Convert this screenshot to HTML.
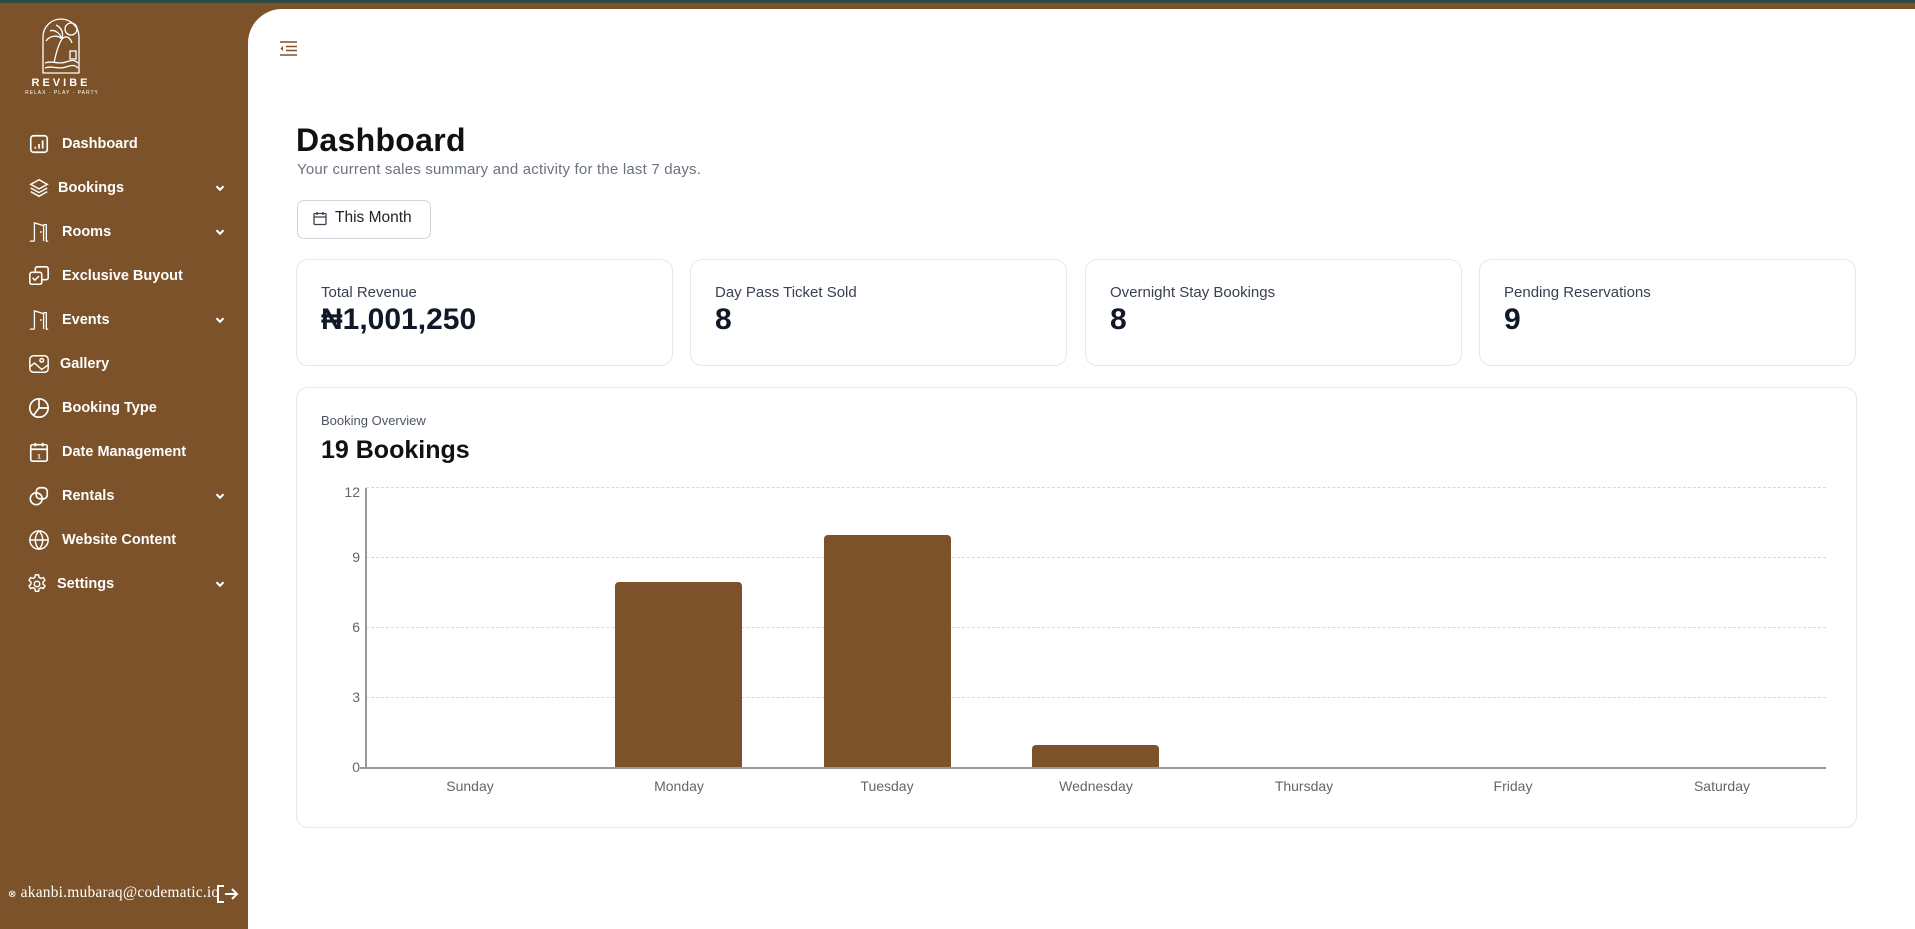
<!DOCTYPE html>
<html><head><meta charset="utf-8"><style>
*{box-sizing:border-box;margin:0;padding:0}
body{width:1915px;height:929px;overflow:hidden;background:#7B5229;font-family:"Liberation Sans",sans-serif;position:relative}
.topbar{position:absolute;left:0;top:0;width:1915px;height:3px;background:#2e4a45}
.main{position:absolute;left:248px;top:9px;width:1667px;height:920px;background:#fff;border-top-left-radius:34px}
.nav{position:absolute;left:0;width:248px;height:24px;color:#fff;font-weight:bold;font-size:14.5px}
.nav svg.ic{position:absolute;left:28px;top:1px}
.nav span{position:absolute;left:62px;top:4px}
.nav .ch{position:absolute;left:213px;top:5px}
.abs{position:absolute}
.card{position:absolute;top:259px;height:107px;width:377px;border:1px solid #e5e7eb;border-radius:12px;background:#fff}
.card .l{position:absolute;left:24px;top:24px;font-size:15px;color:#374151}
.card .v{position:absolute;left:24px;top:43px;font-size:30px;font-weight:bold;color:#111827}
.grid{position:absolute;left:366px;width:1460px;border-top:1.5px dashed #d9d9d9}
.yl{position:absolute;left:340px;width:20px;text-align:right;font-size:14px;color:#666}
.xl{position:absolute;top:778px;width:208px;text-align:center;font-size:14px;color:#666}
.bar{position:absolute;width:127px;background:#7B5229;border-radius:4px 4px 0 0}
</style></head><body>
<div class="topbar"></div>
<svg class="abs" style="left:38px;top:15px" width="46" height="60" viewBox="0 0 46 60" fill="none" stroke="#fff" stroke-width="1.3">
<path d="M5 58V22A18 18 0 0 1 41 22V58Z"/>
<circle cx="33" cy="14" r="6"/>
<path d="M16 48C18 38 20 30 24 24M24 24C20 20 12 20 8 26M24 24C22 18 16 14 12 16M24 24C28 20 32 22 34 28M24 24C26 16 22 12 18 10"/>
<path d="M7 48C14 45 20 50 28 47S38 46 40 48M7 53C14 50 20 55 28 52S38 51 40 53"/>
<rect x="32" y="36" width="6" height="8"/>
</svg>
<div class="abs" style="left:25px;top:77px;width:72px;text-align:center;color:#fff;font-size:11px;letter-spacing:3px;font-weight:bold">REVIBE</div>
<div class="abs" style="left:18px;top:90px;width:88px;text-align:center;color:#fff;font-size:5px;letter-spacing:1px">RELAX · PLAY · PARTY</div>

<div class="nav" style="top:132px"><svg class="ic" width="22" height="22" viewBox="0 0 24 24" fill="none" stroke="#fff" stroke-width="1.8"><rect x="3" y="3" width="18" height="18" rx="3"/><path d="M8 17v-2M12 17v-5M16 17V8"/></svg><span>Dashboard</span></div>
<div class="nav" style="top:176px"><svg class="ic" width="22" height="22" viewBox="0 0 24 24" fill="none" stroke="#fff" stroke-width="1.6"><path d="M12 3 3 8l9 5 9-5z"/><path d="M3 12l9 5 9-5M3 16l9 5 9-5"/></svg><span style="left:58px">Bookings</span><svg class="ch" width="14" height="14" viewBox="0 0 12 12" fill="none" stroke="#fff" stroke-width="1.8"><path d="M3 4.5l3 3 3-3"/></svg></div>
<div class="nav" style="top:220px"><svg class="ic" width="22" height="22" viewBox="0 0 24 24" fill="none" stroke="#fff" stroke-width="1.4"><path d="M2 22h5M7 22V2l10 3v17M17 4h3v18h2"/><path d="M14 11v2"/></svg><span>Rooms</span><svg class="ch" width="14" height="14" viewBox="0 0 12 12" fill="none" stroke="#fff" stroke-width="1.8"><path d="M3 4.5l3 3 3-3"/></svg></div>
<div class="nav" style="top:264px"><svg class="ic" width="22" height="22" viewBox="0 0 24 24" fill="none" stroke="#fff" stroke-width="1.7"><rect x="2" y="8" width="13" height="13" rx="2"/><path d="M8 8V4a2 2 0 0 1 2-2h10a2 2 0 0 1 2 2v10a2 2 0 0 1-2 2h-5"/><path d="M5 14l2.5 2.5L12 12"/></svg><span>Exclusive Buyout</span></div>
<div class="nav" style="top:308px"><svg class="ic" width="22" height="22" viewBox="0 0 24 24" fill="none" stroke="#fff" stroke-width="1.4"><path d="M2 22h5M7 22V2l10 3v17M17 4h3v18h2"/><path d="M14 11v2"/></svg><span>Events</span><svg class="ch" width="14" height="14" viewBox="0 0 12 12" fill="none" stroke="#fff" stroke-width="1.8"><path d="M3 4.5l3 3 3-3"/></svg></div>
<div class="nav" style="top:352px"><svg class="ic" width="22" height="22" viewBox="0 0 24 24" fill="none" stroke="#fff" stroke-width="1.6"><rect x="2" y="3" width="20" height="18" rx="4"/><path d="M2 15l5-4 8 7 7-5"/><circle cx="15" cy="8" r="2"/></svg><span style="left:60px">Gallery</span></div>
<div class="nav" style="top:396px"><svg class="ic" width="22" height="22" viewBox="0 0 24 24" fill="none" stroke="#fff" stroke-width="1.8"><circle cx="12" cy="12" r="10"/><path d="M12 2v10h10M12 12l-6 8"/></svg><span>Booking Type</span></div>
<div class="nav" style="top:440px"><svg class="ic" width="22" height="22" viewBox="0 0 24 24" fill="none" stroke="#fff" stroke-width="1.8"><rect x="3" y="4" width="18" height="18" rx="2"/><path d="M3 9h18M8 2v4M16 2v4"/><text x="12" y="19" font-size="7" fill="#fff" stroke="none" text-anchor="middle" font-family="Liberation Sans" font-weight="bold">1</text></svg><span>Date Management</span></div>
<div class="nav" style="top:484px"><svg class="ic" width="22" height="22" viewBox="0 0 24 24" fill="none" stroke="#fff" stroke-width="1.8"><circle cx="9" cy="15" r="6.5"/><rect x="9" y="3" width="12" height="12" rx="4"/></svg><span>Rentals</span><svg class="ch" width="14" height="14" viewBox="0 0 12 12" fill="none" stroke="#fff" stroke-width="1.8"><path d="M3 4.5l3 3 3-3"/></svg></div>
<div class="nav" style="top:528px"><svg class="ic" width="22" height="22" viewBox="0 0 24 24" fill="none" stroke="#fff" stroke-width="1.6"><circle cx="12" cy="12" r="10"/><path d="M2 12h20M12 2c3 3 4 7 4 10s-1 7-4 10c-3-3-4-7-4-10s1-7 4-10"/></svg><span>Website Content</span></div>
<div class="nav" style="top:572px"><svg class="ic" style="left:26px" width="22" height="22" viewBox="0 0 24 24" fill="none" stroke="#fff" stroke-width="1.6"><circle cx="12" cy="12" r="3"/><path d="M10.3 2h3.4l.6 2.8 2 1.1 2.7-.9 1.7 2.9-2.1 1.9v2.3l2.1 1.9-1.7 2.9-2.7-.9-2 1.1-.6 2.8h-3.4l-.6-2.8-2-1.1-2.7.9-1.7-2.9 2.1-1.9v-2.3L3.3 7.9 5 5l2.7.9 2-1.1z"/></svg><span style="left:57px">Settings</span><svg class="ch" width="14" height="14" viewBox="0 0 12 12" fill="none" stroke="#fff" stroke-width="1.8"><path d="M3 4.5l3 3 3-3"/></svg></div>

<div class="abs" style="left:8px;top:884px;color:#fff;font-family:'Liberation Serif',serif;font-size:15.5px;letter-spacing:0.2px"><span style="font-size:10px">⊗</span> akanbi.mubaraq@codematic.io</div>
<svg class="abs" style="left:216px;top:884px" width="24" height="20" viewBox="0 0 24 20" fill="none" stroke="#fff" stroke-width="2"><path d="M8 2H2v16h6M9 10h12M16 5l5 5-5 5"/></svg>

<div class="main"></div>
<svg class="abs" style="left:280px;top:41px" width="17" height="15" viewBox="0 0 17 15" fill="none" stroke="#7B5229" stroke-width="1.6"><path d="M0 1h17M6 5.5h11M6 9.5h11M0 14h17"/><path d="M3 5v5L0.5 7.5z" fill="#7B5229" stroke="none"/></svg>
<div class="abs" style="left:296px;top:122px;font-size:32px;font-weight:bold;color:#111;letter-spacing:0.3px">Dashboard</div>
<div class="abs" style="left:297px;top:161px;font-size:15px;color:#6b7280;letter-spacing:0.2px">Your current sales summary and activity for the last 7 days.</div>
<div class="abs" style="left:297px;top:200px;width:134px;height:39px;border:1px solid #d1d5db;border-radius:7px"></div>
<svg class="abs" style="left:313px;top:211px" width="14" height="15" viewBox="0 0 14 15" fill="none" stroke="#374151" stroke-width="1.3"><rect x="1" y="2.5" width="12" height="11" rx="1"/><path d="M1 6h12M4 1v3M10 1v3"/></svg>
<div class="abs" style="left:335px;top:209px;font-size:15.5px;color:#222">This Month</div>

<div class="card" style="left:296px"><div class="l">Total Revenue</div><div class="v">₦1,001,250</div></div>
<div class="card" style="left:690px"><div class="l">Day Pass Ticket Sold</div><div class="v">8</div></div>
<div class="card" style="left:1085px"><div class="l">Overnight Stay Bookings</div><div class="v">8</div></div>
<div class="card" style="left:1479px"><div class="l">Pending Reservations</div><div class="v">9</div></div>

<div class="abs" style="left:296px;top:387px;width:1561px;height:441px;border:1px solid #e5e7eb;border-radius:12px"></div>
<div class="abs" style="left:321px;top:413px;font-size:13px;color:#4b5563">Booking Overview</div>
<div class="abs" style="left:321px;top:436px;font-size:25px;font-weight:bold;color:#111">19 Bookings</div>

<div class="grid" style="top:487px"></div>
<div class="grid" style="top:557px"></div>
<div class="grid" style="top:627px"></div>
<div class="grid" style="top:697px"></div>
<div class="yl" style="top:484px">12</div>
<div class="yl" style="top:549px">9</div>
<div class="yl" style="top:619px">6</div>
<div class="yl" style="top:689px">3</div>
<div class="yl" style="top:759px">0</div>
<div class="bar" style="left:615px;top:582px;height:186px"></div>
<div class="bar" style="left:824px;top:535px;height:233px"></div>
<div class="bar" style="left:1032px;top:745px;height:23px"></div>
<div class="abs" style="left:365px;top:488px;width:1.5px;height:281px;background:#999"></div>
<div class="abs" style="left:360px;top:767px;width:1466px;height:1.5px;background:#999"></div>
<div class="xl" style="left:366px">Sunday</div>
<div class="xl" style="left:575px">Monday</div>
<div class="xl" style="left:783px">Tuesday</div>
<div class="xl" style="left:992px">Wednesday</div>
<div class="xl" style="left:1200px">Thursday</div>
<div class="xl" style="left:1409px">Friday</div>
<div class="xl" style="left:1618px">Saturday</div>
</body></html>
